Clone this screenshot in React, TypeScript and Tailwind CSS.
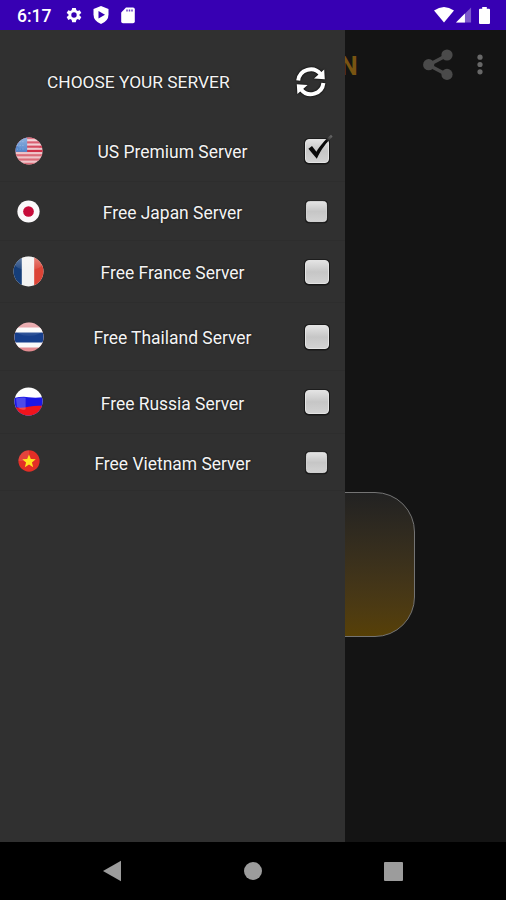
import React from "react";

type Flag = "us" | "jp" | "fr" | "th" | "ru" | "vn";

function FlagArt({ flag }: { flag: Flag }) {
  switch (flag) {
    case "us":
      return (
        <>
          <rect width="30" height="30" fill="#eec5ca" />
          {[0, 4.6, 9.2, 13.8, 18.4, 23, 27.6].map((y) => (
            <rect key={y} y={y} width="30" height="2.3" fill={y < 14 ? "#cf3048" : "#da6c79"} />
          ))}
          <rect width="13" height="16" fill="#5688cb" />
          <path d="M2 5h9M2 9h9M2 13h9" stroke="#8db3e2" strokeDasharray="1 2" />
        </>
      );
    case "jp":
      return (
        <>
          <rect width="30" height="30" fill="#fbf9fa" />
          <circle cx="15" cy="15" r="7" fill="#c70c3a" />
        </>
      );
    case "fr":
      return (
        <>
          <rect width="30" height="30" fill="#f2f2f2" />
          <rect width="8.5" height="30" fill="#153d78" />
          <rect x="20.5" width="10" height="30" fill="#dc4436" />
        </>
      );
    case "th":
      return (
        <>
          <rect width="30" height="30" fill="#e28b90" />
          <rect y="5.5" width="30" height="20" fill="#fafafa" />
          <rect y="10.5" width="30" height="10" fill="#173f8c" />
        </>
      );
    case "ru":
      return (
        <>
          <rect width="30" height="30" fill="#fff" />
          <path d="M0 11.5Q8 9.5 15 10.5T30 10.5V30H0Z" fill="#1b16e6" />
          <path d="M0 21Q8 22 15 20.5T30 19.5V30H0Z" fill="#f0141c" />
          <path d="M2 12Q7 10.5 12 11V23Q7 25 3 20Z" fill="#fff" opacity=".22" />
        </>
      );
    case "vn":
      return (
        <>
          <rect width="30" height="30" fill="#e32e26" />
          <path d="M0 0H15V15H0Z" fill="#fff" opacity=".1" />
          <path d="m15 6 2.5 6.3 6.7.4-5.2 4.3 1.7 6.5-5.7-3.6-5.7 3.6L11 17l-5.2-4.3 6.7-.4Z" fill="#ffe320" />
        </>
      );
  }
}

function FlagIcon({ flag, size }: { flag: Flag; size: number }) {
  const glossy = flag === "us" || flag === "fr" || flag === "th";
  return (
    <svg width={size} height={size} viewBox="0 0 30 30">
      <defs>
        <clipPath id={`clip-${flag}`}>
          <circle cx="15" cy="15" r="14.5" />
        </clipPath>
        <linearGradient id={`gloss-${flag}`} x2="0" y2="1">
          <stop stopColor="#fff" stopOpacity=".4" />
          <stop offset="1" stopColor="#fff" stopOpacity=".05" />
        </linearGradient>
      </defs>
      <g clipPath={`url(#clip-${flag})`}>
        <FlagArt flag={flag} />
        {glossy && <ellipse cx="15" cy="6" rx="14" ry="8" fill={`url(#gloss-${flag})`} />}
      </g>
    </svg>
  );
}

function Checkbox({ size, checked }: { size: number; checked?: boolean }) {
  return (
    <svg width={size} height={size} viewBox="0 0 24 24" className="overflow-visible">
      <defs>
        <linearGradient id="box-face" x2="0" y2="1">
          <stop stopColor="#e4e4e4" />
          <stop offset=".5" stopColor="#c6c6c6" />
          <stop offset="1" stopColor="#d2d2d2" />
        </linearGradient>
        <linearGradient id="tick-fade" gradientUnits="userSpaceOnUse" x1="21" y1="2" x2="27" y2="-4">
          <stop stopColor="#090909" />
          <stop offset=".5" stopColor="#4a4a4a" />
          <stop offset="1" stopColor="#707070" />
        </linearGradient>
      </defs>
      <rect x="-1" y="-.8" width="26" height="26.2" rx="4.5" fill="#131313" opacity=".85" />
      <rect x=".5" y=".5" width="23" height="23" rx="3.5" fill="url(#box-face)" stroke="#e3e3e3" />
      {checked && (
        <path d="M3.4 9.8 7 7 11.4 12.8C15 7 19 2 26-4.2L27.6-2.2C21 4 16.5 10 11.8 19.8Z" fill="url(#tick-fade)" />
      )}
    </svg>
  );
}

const servers: { name: string; flag: Flag; row: string; flagSize: number; box: number; checked?: boolean }[] = [
  { name: "US Premium Server", flag: "us", row: "h-[62px]", flagSize: 28, box: 24, checked: true },
  { name: "Free Japan Server", flag: "jp", row: "h-[59px]", flagSize: 23, box: 21 },
  { name: "Free France Server", flag: "fr", row: "h-[62px]", flagSize: 31, box: 24 },
  { name: "Free Thailand Server", flag: "th", row: "h-[68px]", flagSize: 30, box: 24 },
  { name: "Free Russia Server", flag: "ru", row: "h-[63px]", flagSize: 29, box: 24 },
  { name: "Free Vietnam Server", flag: "vn", row: "h-[57px]", flagSize: 22, box: 21 },
];

function StatusBar() {
  return (
    <header className="flex h-[30px] items-center bg-[#3700b3] pl-[17px] pr-[16px] text-white">
      <span className="mt-[3px] w-[48px] text-[17.5px] font-medium leading-none">6:17</span>
      <svg width="18" height="18" viewBox="0 0 24 24" fill="currentColor">
        <path
          fillRule="evenodd"
          d="M19.4 13a7.5 7.5 0 0 0 0-2l2.4-1.7-2.2-3.8-2.7 1.1a7 7 0 0 0-1.7-1L14.4 2.5H9.6L8.8 5.6a7 7 0 0 0-1.7 1L4.4 5.5 2.2 9.3 4.6 11a7.5 7.5 0 0 0 0 2l-2.4 1.7 2.2 3.8 2.7-1.1a7 7 0 0 0 1.7 1l.8 3.1h4.8l.8-3.1a7 7 0 0 0 1.7-1l2.7 1.1 2.2-3.8ZM12 15.6a3.6 3.6 0 1 1 0-7.2 3.6 3.6 0 0 1 0 7.2Z"
        />
      </svg>
      <svg width="16" height="18" viewBox="0 0 16 18" className="ml-[10px]">
        <path d="M8 0 15.5 3V8.5Q15.5 15 8 18 .5 15 .5 8.5V3Z" fill="currentColor" />
        <path d="M5.5 5 12 8.8 5.5 12.6Z" fill="#3700b3" />
      </svg>
      <svg width="14" height="17" viewBox="0 0 14 17" className="ml-[12px]">
        <path d="M5 .5H12Q13.8.5 13.8 2.2V14.5Q13.8 16.2 12 16.2H2Q.2 16.2.2 14.5V5.5Z" fill="currentColor" />
        <path d="M6 2.5V4.5M8.5 2.5V4.5M11 2.5V4.5" stroke="#3700b3" strokeWidth="1.5" opacity=".75" />
      </svg>
      <div className="ml-auto flex items-center">
        <svg width="20" height="16" viewBox="0 0 20 16">
          <path d="M0 3.5Q10-3.5 20 3.5L10 15.5Z" fill="currentColor" />
        </svg>
        <svg width="16" height="16" viewBox="0 0 17 17" className="ml-[2px]">
          <path d="M0 16.5 16 .5V16.5Z" fill="#7c58cc" />
          <path d="M0 16.5 9.5 7V16.5Z" fill="currentColor" />
        </svg>
        <svg width="11" height="17" viewBox="0 0 11 17" className="ml-[7px]">
          <path d="M3.2 0H7.8V1.7H10Q11 1.7 11 2.7V16Q11 17 10 17H1Q0 17 0 16V2.7Q0 1.7 1 1.7H3.2Z" fill="currentColor" />
        </svg>
      </div>
    </header>
  );
}

function Drawer() {
  return (
    <aside className="absolute inset-y-0 left-0 w-[345px] bg-[#303030] text-[#f4f4f4] [text-shadow:0_0_2px_#111]">
      <div className="flex h-[90px] items-center justify-between pl-[47px] pr-[18px] pt-[13px]">
        <h1 className="mt-[2px] whitespace-nowrap text-[17.35px] leading-none">CHOOSE YOUR SERVER</h1>
        <svg width="32" height="32" viewBox="0 0 32 32" fill="none" className="drop-shadow-[0_0_1px_#000]">
          <path d="M3.2 14.5A12.6 12.6 0 0 1 25.5 8M28.4 17A12.6 12.6 0 0 1 6.1 23.5" stroke="#fff" strokeWidth="4" />
          <path d="M29.2 3.4 29.8 13.2 19 12.4ZM2.4 28.1 1.8 18.3 12.6 19.1Z" fill="#fff" />
        </svg>
      </div>
      <ul>
        {servers.map((s) => (
          <li
            key={s.flag}
            className={`${s.row} grid grid-cols-[57px_1fr_57px] items-center border-b border-[#2d2d2d]`}
          >
            <span className={s.flag === "ru" || s.flag === "vn" ? "flex justify-center pb-[2px]" : "flex justify-center"}>
              <FlagIcon flag={s.flag} size={s.flagSize} />
            </span>
            <span className="pt-[5px] text-center text-[17.45px] leading-none">{s.name}</span>
            <span className="flex justify-center">
              <Checkbox size={s.box} checked={s.checked} />
            </span>
          </li>
        ))}
      </ul>
    </aside>
  );
}

export default function App() {
  return (
    <div className="flex h-[900px] w-[506px] flex-col overflow-hidden bg-black font-['Roboto',sans-serif]">
      <StatusBar />
      <main className="relative h-[812px] bg-[#141414]">
        <div className="flex h-[70px] items-center pl-[340px] pr-[23px]">
          <span className="mt-[2px] text-[25px] font-bold leading-none text-[#795412]">N</span>
          <svg width="30" height="32" viewBox="0 0 30 32" className="ml-auto" fill="#4a4a4a">
            <path d="M24.5 6 5.5 16 24.5 26" fill="none" stroke="#4a4a4a" strokeWidth="3.6" />
            <circle cx="24" cy="6" r="5.6" />
            <circle cx="5.7" cy="15.7" r="5.6" />
            <circle cx="24" cy="25.4" r="5.6" />
          </svg>
          <svg width="6" height="22" viewBox="0 0 6 22" className="ml-[24px]" fill="#686868">
            <circle cx="3" cy="3.2" r="2.6" />
            <circle cx="3" cy="10.5" r="2.6" />
            <circle cx="3" cy="17.8" r="2.6" />
          </svg>
        </div>
        <div className="ml-[91px] mt-[392px] h-[145px] w-[324px] rounded-[40px] border border-[#747474] bg-gradient-to-b from-[#222222] to-[#574006]" />
        <Drawer />
      </main>
      <nav className="flex h-[58px] items-center justify-between bg-black pl-[102px] pr-[103px]">
        <svg width="20" height="22" viewBox="0 0 20 22">
          <path d="M1 11 19 .8V21.2Z" fill="#9c9c9c" />
        </svg>
        <span className="h-[18px] w-[18px] rounded-full bg-[#9c9c9c]" />
        <span className="h-[19px] w-[19px] rounded-[1px] bg-[#9c9c9c]" />
      </nav>
    </div>
  );
}
